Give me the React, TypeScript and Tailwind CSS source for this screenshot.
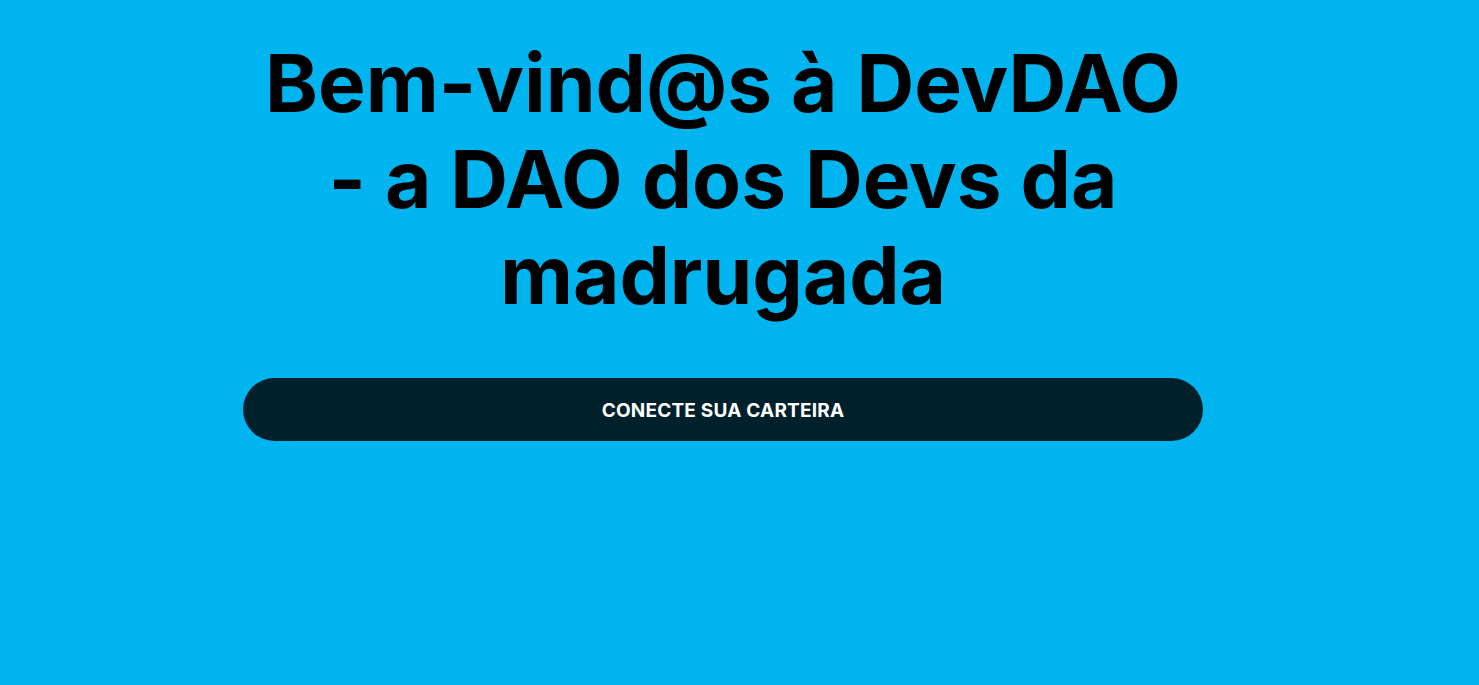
export default function App() {
  return (
    <div className="min-h-[685px] w-full bg-[#00b5ef]" style={{ fontFamily: "Inter, 'Noto Sans', sans-serif" }}>
      <div className="flex flex-col items-center pr-[33px] pt-[35px]">
        <h1 className="w-[960px] text-center text-[80px] font-bold leading-[96px] text-black">
          Bem-vind@s à DevDAO - a DAO dos Devs da madrugada
        </h1>
        <button className="mt-[55px] h-[63px] w-[960px] rounded-full bg-[#00212c] pt-[3px] text-[19px] font-bold uppercase tracking-[0.2px] text-white">
          Conecte sua carteira
        </button>
      </div>
    </div>
  );
}
